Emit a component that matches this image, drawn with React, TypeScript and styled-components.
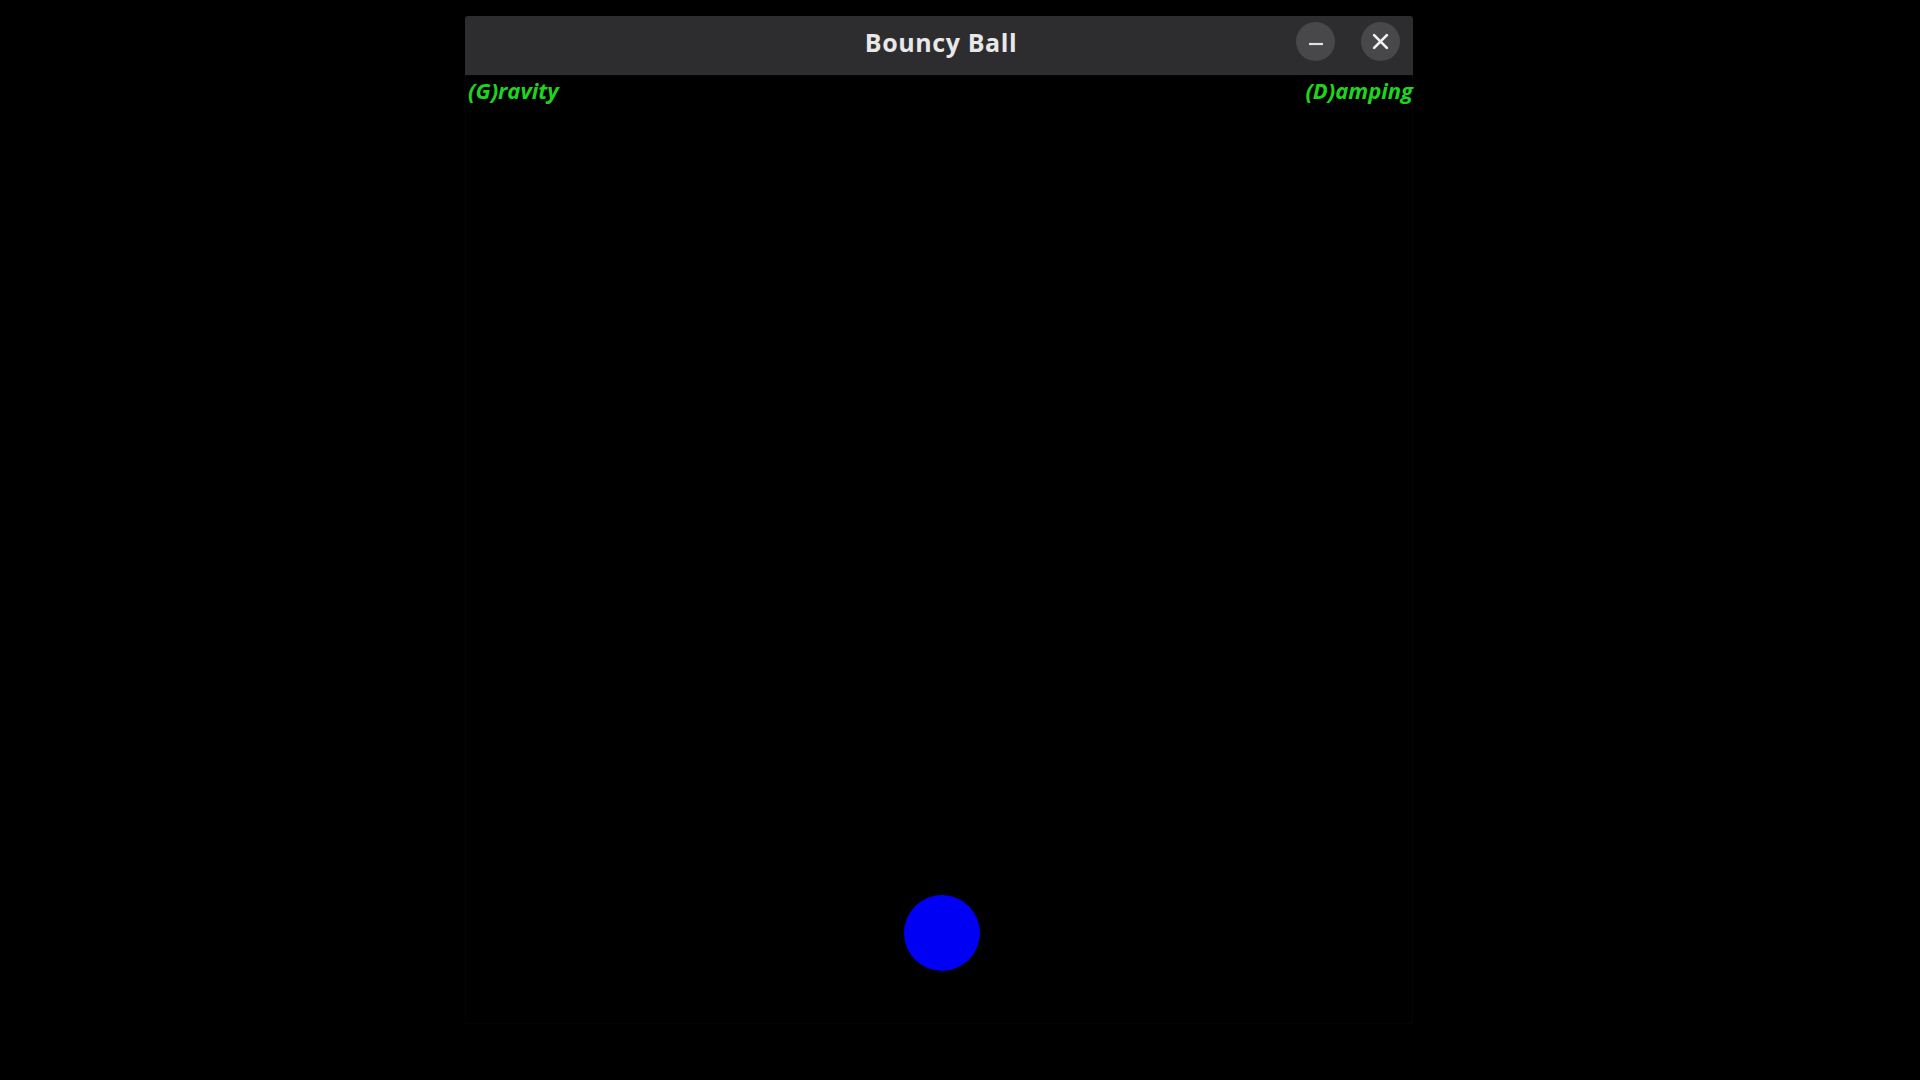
import React from "react";
import styled, { createGlobalStyle } from "styled-components";

const Global = createGlobalStyle`
  html, body { margin: 0; padding: 0; background: #000; }
  body { width: 1920px; height: 1080px; overflow: hidden; }
`;

const Page = styled.div`
  padding: 16px 0 0 465px;
`;

const Window = styled.div`
  width: 948px;
  display: flex;
  flex-direction: column;
`;

const TitleBar = styled.div`
  height: 59px;
  box-sizing: border-box;
  padding-bottom: 8px;
  background: #2d2d2f;
  border-radius: 3px 3px 0 0;
  position: relative;
  display: flex;
  align-items: center;
  justify-content: center;
`;

const Title = styled.div`
  font-family: "Open Sans", "Noto Sans", sans-serif;
  font-weight: 700;
  font-size: 25px;
  color: #e8e8e8;
  letter-spacing: 0.6px;
  padding-left: 4px;
`;

const Controls = styled.div`
  position: absolute;
  right: 13px;
  top: 0;
  bottom: 8px;
  display: flex;
  align-items: center;
  gap: 26px;
`;

const CircleButton = styled.div`
  width: 39px;
  height: 39px;
  border-radius: 50%;
  background: #48484b;
  display: flex;
  align-items: center;
  justify-content: center;
`;

const Canvas = styled.div`
  height: 949px;
  background: #000;
  position: relative;
  box-shadow: inset 0 0 0 1px #050508;
`;

const Labels = styled.div`
  display: flex;
  justify-content: space-between;
  padding: 1px 0 0 3px;
`;

const Label = styled.span`
  font-family: "Open Sans", "Noto Sans", sans-serif;
  font-style: italic;
  font-weight: 700;
  font-size: 22px;
  color: #1fd41f;
  line-height: 28px;
`;

const Ball = styled.div`
  position: absolute;
  left: 439px;
  top: 820px;
  width: 76px;
  height: 76px;
  border-radius: 50%;
  background: #0000f5;
`;

export default function App() {
  return (
    <>
      <Global />
      <Page>
        <Window>
          <TitleBar>
            <Title>Bouncy Ball</Title>
            <Controls>
              <CircleButton>
                <svg width="16" height="16" viewBox="0 0 16 16">
                  <line x1="1" y1="10" x2="15" y2="10" stroke="#e0e0e0" strokeWidth="2.2" />
                </svg>
              </CircleButton>
              <CircleButton>
                <svg width="17" height="17" viewBox="0 0 16 16">
                  <path d="M2 2 L14 14 M14 2 L2 14" stroke="#f0f0f0" strokeWidth="2.5" strokeLinecap="round" />
                </svg>
              </CircleButton>
            </Controls>
          </TitleBar>
          <Canvas>
            <Labels>
              <Label>(G)ravity</Label>
              <Label>(D)amping</Label>
            </Labels>
            <Ball />
          </Canvas>
        </Window>
      </Page>
    </>
  );
}
